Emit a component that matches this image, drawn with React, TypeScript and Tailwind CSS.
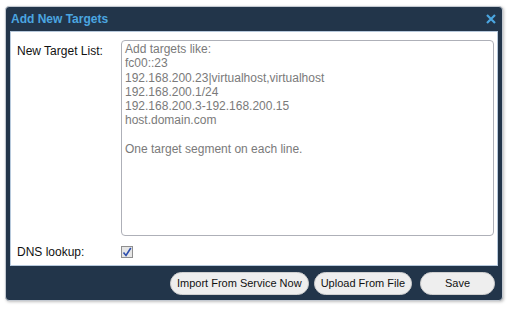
export default function App() {
    const placeholder =
        "Add targets like:\nfc00::23\n192.168.200.23|virtualhost,virtualhost\n192.168.200.1/24\n192.168.200.3-192.168.200.15\nhost.domain.com\n\nOne target segment on each line.";

    return (
        <div className="w-[507px] h-[310px] bg-white pt-[6px] pl-[5px] font-['Liberation_Sans',Arial,sans-serif]">
            {/* ================= DIALOG ================= */}
            <div className="w-[498px] h-[295px] bg-[#22354a] rounded-[4px] border border-[#c3c9d1] shadow-[1px_1px_3px_rgba(0,0,0,0.25)] flex flex-col">
                {/* Title bar */}
                <div className="h-[24px] flex items-center justify-between pl-[5px] pr-[6px]">
                    <span className="text-[12px] font-bold text-[#4ba6e0]">Add New Targets</span>
                    <svg width="10" height="10" viewBox="0 0 10 10">
                        <path d="M1 1 L9 9 M9 1 L1 9" stroke="#4ba6e0" strokeWidth="2.2" />
                    </svg>
                </div>

                {/* Body */}
                <div className="mx-[4px] h-[235px] bg-white border border-[#b7c9dc] flex flex-col">
                    <div className="flex pt-[8px]">
                        <label className="w-[110px] pl-[6px] pt-[2px] text-[12px] text-[#111]">New Target List:</label>
                        <textarea
                            placeholder={placeholder}
                            className="w-[373px] h-[196px] resize-none rounded-[4px] border border-[#aeb0b8] px-[3px] pt-[1px] text-[12px] leading-[14.3px] placeholder:text-[#7a7a7a] outline-none"
                        />
                    </div>
                    <div className="flex items-center mt-[7px]">
                        <span className="w-[110px] pl-[6px] text-[12px] text-[#111]">DNS lookup:</span>
                        <span className="w-[12px] h-[12px] border border-[#8f8f8f] bg-[#e6e6e6] flex items-center justify-center">
                            <svg width="10" height="10" viewBox="0 0 10 10">
                                <path d="M1.5 5.5 L4 8.5 L8.8 1" fill="none" stroke="#2e4fae" strokeWidth="1.6" />
                            </svg>
                        </span>
                    </div>
                </div>

                {/* Footer */}
                <div className="flex-1 flex items-center justify-end gap-[5px] pr-[7px] pt-[1px]">
                    {["Import From Service Now", "Upload From File"].map((label, index) => (
                        <button
                            key={index}
                            className="h-[23px] px-[6px] rounded-full bg-[#eeeeee] border border-[#cfcfcf] text-[11px] text-[#111]"
                        >
                            {label}
                        </button>
                    ))}
                    <button className="ml-[3px] h-[23px] w-[75px] rounded-full bg-[#eeeeee] border border-[#cfcfcf] text-[11px] text-[#111]">
                        Save
                    </button>
                </div>
            </div>
        </div>
    );
}
